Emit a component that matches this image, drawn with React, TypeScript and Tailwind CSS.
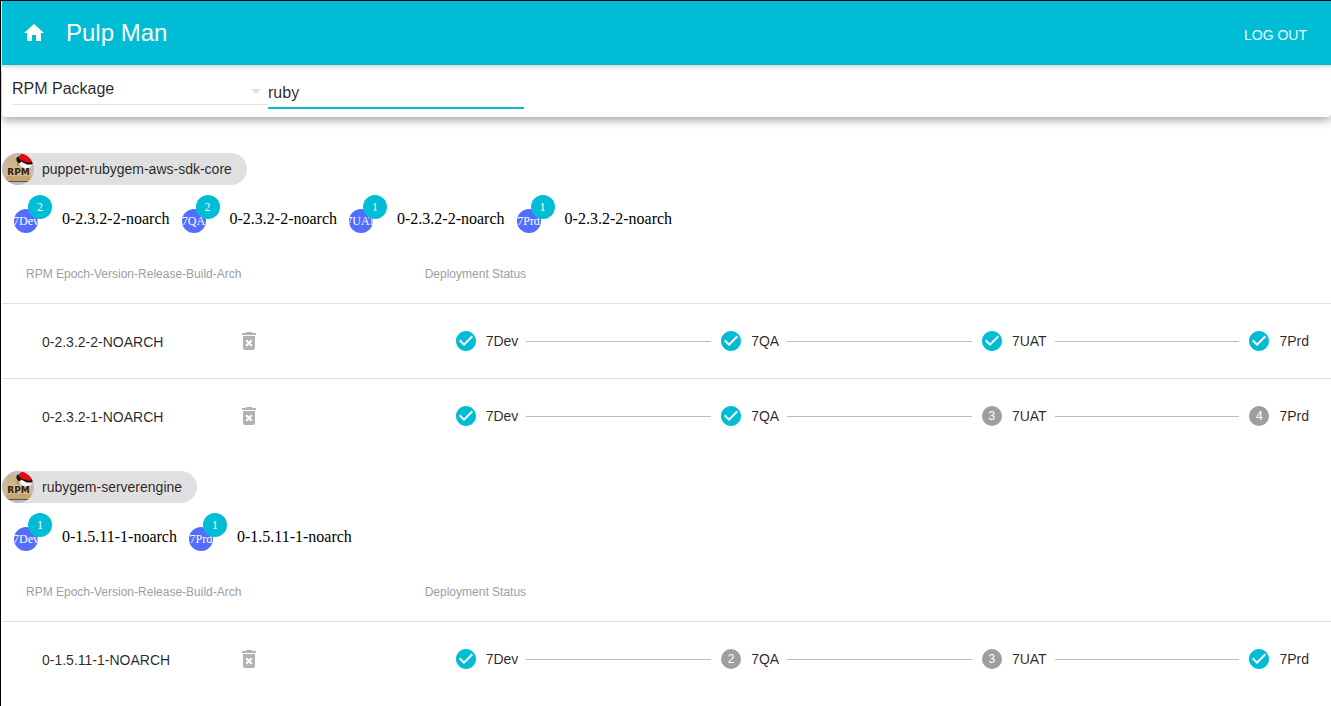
type Release = { name: string; steps: boolean[] };
type Environment = { label: string; count: number; version: string };
type RpmPackage = { name: string; environments: Environment[]; releases: Release[] };

const stages = ["7Dev", "7QA", "7UAT", "7Prd"];

const packages: RpmPackage[] = [
  {
    name: "puppet-rubygem-aws-sdk-core",
    environments: [
      { label: "7Dev", count: 2, version: "0-2.3.2-2-noarch" },
      { label: "7QA", count: 2, version: "0-2.3.2-2-noarch" },
      { label: "7UAT", count: 1, version: "0-2.3.2-2-noarch" },
      { label: "7Prd", count: 1, version: "0-2.3.2-2-noarch" },
    ],
    releases: [
      { name: "0-2.3.2-2-noarch", steps: [true, true, true, true] },
      { name: "0-2.3.2-1-noarch", steps: [true, true, false, false] },
    ],
  },
  {
    name: "rubygem-serverengine",
    environments: [
      { label: "7Dev", count: 1, version: "0-1.5.11-1-noarch" },
      { label: "7Prd", count: 1, version: "0-1.5.11-1-noarch" },
    ],
    releases: [{ name: "0-1.5.11-1-noarch", steps: [true, false, false, true] }],
  },
];

function RpmLogo() {
  return (
    <svg viewBox="0 0 32 32" className="size-8 shrink-0 rounded-full" aria-hidden="true">
      <rect width="32" height="32" fill="#bdbdbd" />
      <path d="M7 4h19l3 9v13q0 2-2 2H6q-2 0-2-2V13z" fill="#c9ad7e" />
      <path d="M7 4h8v9H4z" fill="#cfb486" />
      <path d="M16 4h10l3 9H16z" fill="#bd9e6a" />
      <path d="M4 13h25v10H4z" fill="#d3ba8d" />
      <path d="M4 23h25v3.500q0 1.500-2 1.500H6q-2 0-2-1.500z" fill="#c4a573" />
      <path d="M6 28h20v1H7z" fill="#5e5342" />
      <path d="M15.500 4v9" stroke="#a88a58" strokeWidth="1" />
      <text x="16.500" y="22" textAnchor="middle" fontSize="9" fontWeight="700" fontFamily="DejaVu Sans, sans-serif" fill="#2b2218">
        RPM
      </text>
      <path d="M16 6l14 5c.5 2-2 4-6 4-5 0-8-4-8-9z" fill="#f8f8f8" />
      <path d="M14.500 5.500c-.6 2.500 1 4 3.500 5l1-2 6 3h4.500c1.500-.5 1.500-2 .5-3.500L17 3.500c-1.500 0-2.300.8-2.500 2z" fill="#140c0c" />
      <path d="M16.500 5.500C17 2.500 19 .5 21 1.200c2-.7 5 0 6.500 2 1.200 1.800 2 3.800 2.300 6-3 1.300-5.800.8-8-.7-2.300-.5-4.300-1.500-5.300-3z" fill="#dd0d12" />
      <path d="M17 5.500c2 2.500 6 4.500 11.500 4" fill="none" stroke="#3a0808" strokeWidth=".5" />
    </svg>
  );
}

function StepIcon({ done, number }: { done: boolean; number: number }) {
  if (done) {
    return (
      <svg viewBox="0 0 24 24" className="size-6 shrink-0 fill-[#00bcd4]" aria-hidden="true">
        <path d="M12 2C6.480 2 2 6.480 2 12s4.480 10 10 10 10-4.480 10-10S17.520 2 12 2zm-2 15l-5-5 1.410-1.410L10 14.170l7.590-7.590L19 8l-9 9z" />
      </svg>
    );
  }
  return (
    <span className="m-0.5 flex size-5 shrink-0 items-center justify-center rounded-full bg-[#9e9e9e] text-xs text-white">
      {number}
    </span>
  );
}

function Stepper({ steps }: { steps: boolean[] }) {
  return (
    <ol className="flex items-center pl-[29px]">
      {stages.map((stage, i) => (
        <li key={stage} className={i === 0 ? "flex items-center" : "flex flex-auto items-center"}>
          {i > 0 && <span className="mx-2 mt-0.5 h-px flex-auto bg-[#bdbdbd]" />}
          <span className="flex items-center gap-2">
            <StepIcon done={steps[i]} number={i + 1} />
            {stage}
          </span>
        </li>
      ))}
    </ol>
  );
}

function PackageSection({ item }: { item: RpmPackage }) {
  return (
    <section>
      <h2 className="inline-flex h-8 items-center gap-2 rounded-full bg-[#e0e0e0] pr-[15px] align-top text-sm text-black/85">
        <RpmLogo />
        {item.name}
      </h2>
      <ul className="flex h-[60px] items-start pt-2.5 font-['Liberation_Serif',serif]">
        {item.environments.map((env) => (
          <li key={env.label} className="flex items-start">
            <span className="relative mr-6 ml-3 pt-3.5">
              <span className="flex size-6 items-center justify-center overflow-hidden rounded-full bg-[#536dfe] text-xs text-white">
                {env.label}
              </span>
              <span className="absolute top-0 left-3.5 flex size-6 items-center justify-center rounded-full bg-[#00bcd4] text-xs text-white">
                {env.count}
              </span>
            </span>
            <span className="pt-3 text-base">{env.version}</span>
          </li>
        ))}
      </ul>
      <table className="w-full table-fixed text-left text-sm text-black/85">
        <thead>
          <tr className="h-[58px] border-b border-[#e0e0e0] text-xs text-[#9e9e9e]">
            <th className="w-[30%] px-6 font-normal">RPM Epoch-Version-Release-Build-Arch</th>
            <th className="px-6 font-normal">Deployment Status</th>
          </tr>
        </thead>
        <tbody>
          {item.releases.map((release) => (
            <tr key={release.name} className="h-[75px] border-b border-[#e0e0e0] last:border-b-0">
              <td className="px-6">
                <div className="flex items-center">
                  <button type="button" className="w-[175px] px-4 pt-0.5 text-left uppercase">
                    {release.name}
                  </button>
                  <button type="button" aria-label="Delete" className="ml-9">
                    <svg viewBox="0 0 24 24" className="size-6 fill-black/30" aria-hidden="true">
                      <path d="M6 19c0 1.100.9 2 2 2h8c1.100 0 2-.9 2-2V7H6v12zm2.460-7.120l1.410-1.410L12 12.590l2.120-2.120 1.410 1.410L13.410 14l2.120 2.120-1.410 1.410L12 15.410l-2.120 2.120-1.410-1.410L10.590 14l-2.130-2.120zM15.500 4l-1-1h-5l-1 1H5v2h14V4z" />
                    </svg>
                  </button>
                </div>
              </td>
              <td className="pr-[22px] pl-6">
                <Stepper steps={release.steps} />
              </td>
            </tr>
          ))}
        </tbody>
      </table>
    </section>
  );
}

export default function App() {
  return (
    <div className="min-h-screen border-t border-l border-black bg-white pl-px font-['Liberation_Sans',Arial,sans-serif] text-black">
      <header className="relative flex h-16 items-center bg-[#00bcd4] px-6 text-white shadow-[0_1px_6px_rgba(0,0,0,0.12),0_1px_4px_rgba(0,0,0,0.12)]">
        <a href="#home" aria-label="Home" className="-ml-1 mr-5">
          <svg viewBox="0 0 24 24" className="size-6 fill-white" aria-hidden="true">
            <path d="M10 20v-6h4v6h5v-8h3L12 3 2 12h3v8z" />
          </svg>
        </a>
        <h1 className="flex-1 text-2xl">Pulp Man</h1>
        <button type="button" className="pt-1 text-sm text-white/90 uppercase">
          Log out
        </button>
      </header>
      <form className="flex h-[52px] items-start rounded-sm px-2.5 shadow-[0_3px_10px_rgba(0,0,0,0.16),0_3px_10px_rgba(0,0,0,0.23)]">
        <div className="relative mt-1 w-64 border-b border-[#e0e0e0]">
          <select aria-label="Content type" defaultValue="rpm" className="h-[35px] w-full appearance-none pt-1 text-base text-black/85 outline-none">
            <option value="rpm">RPM Package</option>
          </select>
          <svg viewBox="0 0 24 24" className="pointer-events-none absolute top-2.5 right-0 size-6 fill-[#e0e0e0]" aria-hidden="true">
            <path d="M7 10l5 5 5-5z" />
          </svg>
        </div>
        <input aria-label="Search" type="text" defaultValue="ruby" className="h-11 w-64 border-b-2 border-[#00bcd4] pt-3.5 text-base text-black/85 outline-none" />
      </form>
      <main className="flex flex-col gap-[18px] pt-9">
        {packages.map((item) => (
          <PackageSection key={item.name} item={item} />
        ))}
      </main>
    </div>
  );
}
